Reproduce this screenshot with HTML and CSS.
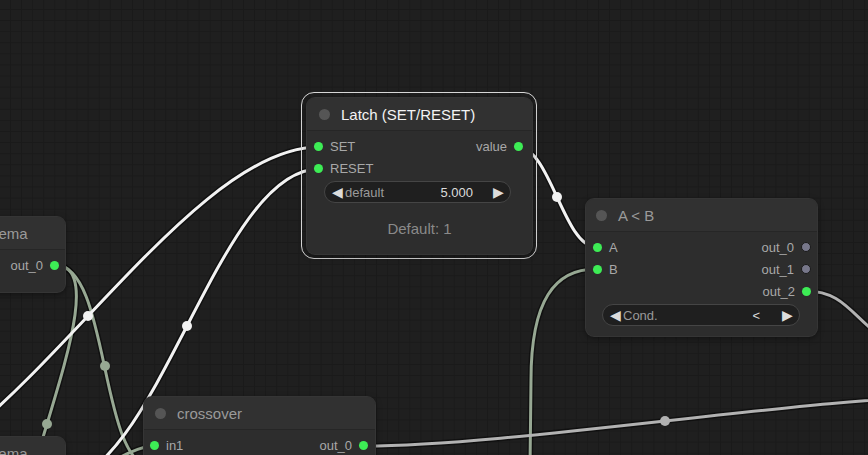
FILE: index.html
```html
<!DOCTYPE html>
<html lang="en">
<head>
    <meta charset="UTF-8">
    <meta name="viewport" content="width=device-width, initial-scale=1.0">
    <title>Graph Editor</title>
    <link rel="stylesheet" href="styles.css">
</head>
<body>

    <div class="canvas">

        <!-- Links (drawn under the nodes) -->
        <svg class="links" width="868" height="455" viewBox="0 0 868 455">
            <g class="shade">
                <path d="M-143 485 C0 485 176 147 319 147"/>
                <path d="M55 483 C157 483 217 169 319 169"/>
                <path d="M518 147 C550 147 564 247 596 247"/>
                <path d="M55 265 C135 265 -41 583 39 583"/>
                <path d="M55 265 C111 265 98 468 154 468"/>
                <path d="M55 485 C82 485 127 446 154 446"/>
                <path d="M596 269 C555 269 531 300 531 380 L530 470"/>
                <path d="M364 446 C515 446 815 396 966 396"/>
                <path d="M806 291 C840 291 850 312 875 332"/>
            </g>
            <g class="link green">
                <path d="M55 265 C135 265 -41 583 39 583"/>
                <path d="M55 265 C111 265 98 468 154 468"/>
                <path d="M55 485 C82 485 127 446 154 446"/>
                <path d="M596 269 C555 269 531 300 531 380 L530 470"/>
                <circle cx="47" cy="424" r="5"/>
                <circle cx="105" cy="366" r="5"/>
            </g>
            <g class="link grey">
                <path d="M364 446 C515 446 815 396 966 396"/>
                <path d="M806 291 C840 291 850 312 875 332"/>
                <circle cx="665" cy="421" r="5"/>
            </g>
            <g class="link white">
                <path d="M-143 485 C0 485 176 147 319 147"/>
                <path d="M55 483 C157 483 217 169 319 169"/>
                <path d="M518 147 C550 147 564 247 596 247"/>
                <circle cx="88" cy="316" r="5"/>
                <circle cx="187" cy="326" r="5"/>
                <circle cx="557" cy="197" r="5"/>
            </g>
        </svg>

        <!-- fast ema (cut off at the left edge) -->
        <div class="node ema-top">
            <div class="title"><span class="knob"></span>fast_ema</div>
            <div class="body">
                <div class="row">
                    <span></span>
                    <span class="slot out">out_0<i class="dot on"></i></span>
                </div>
            </div>
        </div>

        <!-- slow ema (cut off at the bottom left) -->
        <div class="node ema-bottom">
            <div class="title"><span class="knob"></span>slow_ema</div>
        </div>

        <!-- Latch, selected -->
        <div class="selection latch-sel"></div>
        <div class="node latch">
            <div class="title"><span class="knob"></span>Latch (SET/RESET)</div>
            <div class="body">
                <div class="row">
                    <span class="slot in"><i class="dot on"></i>SET</span>
                    <span class="slot out">value<i class="dot on"></i></span>
                </div>
                <div class="row">
                    <span class="slot in"><i class="dot on"></i>RESET</span>
                </div>
                <div class="widget">
                    <span class="arrow">&#9664;</span>
                    <span class="wlabel">default</span>
                    <span class="wvalue">5.000</span>
                    <span class="arrow">&#9654;</span>
                </div>
                <div class="note">Default: 1</div>
            </div>
        </div>

        <!-- A < B -->
        <div class="node compare">
            <div class="title"><span class="knob"></span>A &lt; B</div>
            <div class="body">
                <div class="row">
                    <span class="slot in"><i class="dot on"></i>A</span>
                    <span class="slot out">out_0<i class="dot"></i></span>
                </div>
                <div class="row">
                    <span class="slot in"><i class="dot on"></i>B</span>
                    <span class="slot out">out_1<i class="dot"></i></span>
                </div>
                <div class="row">
                    <span></span>
                    <span class="slot out">out_2<i class="dot on"></i></span>
                </div>
                <div class="widget">
                    <span class="arrow">&#9664;</span>
                    <span class="wlabel">Cond.</span>
                    <span class="wvalue">&lt;</span>
                    <span class="arrow">&#9654;</span>
                </div>
            </div>
        </div>

        <!-- crossover -->
        <div class="node crossover">
            <div class="title"><span class="knob"></span>crossover</div>
            <div class="body">
                <div class="row">
                    <span class="slot in"><i class="dot on"></i>in1</span>
                    <span class="slot out">out_0<i class="dot on"></i></span>
                </div>
            </div>
        </div>

    </div>

</body>
</html>
```

FILE: styles.css
```css
body {
    margin: 0;
    background-color: #1e1e1e;
    font-family: "Liberation Sans", Arial, sans-serif;
}
.canvas {
    position: relative;
    width: 868px;
    height: 455px;
    overflow: hidden;
    background-color: #1f1f1f;
    background-image:
        linear-gradient(to right, #1a1a1a 1px, transparent 1px),
        linear-gradient(to bottom, #1a1a1a 1px, transparent 1px);
    background-size: 11.1px 11.1px;
    background-position: 10px 9px;
}
.links {
    position: absolute;
    left: 0;
    top: 0;
}
.links path {
    fill: none;
}
.shade path {
    stroke: rgba(0, 0, 0, 0.45);
    stroke-width: 6;
}
.link path {
    stroke-width: 3;
}
.white path { stroke: #f2f2f2; }
.white circle { fill: #f2f2f2; }
.green path { stroke: #97a893; }
.green circle { fill: #97a893; }
.grey path { stroke: #b2b2b2; }
.grey circle { fill: #b2b2b2; }

/* nodes */
.node {
    position: absolute;
    background-color: #2d2d2d;
    border-radius: 8px;
    box-shadow: 0 0 0 1px #353535, 0 2px 6px rgba(0, 0, 0, 0.5);
    overflow: hidden;
    color: #a8a8a8;
    font-size: 13px;
}
.title {
    height: 33px;
    box-sizing: border-box;
    display: flex;
    align-items: center;
    padding-left: 11px;
    background-color: #313131;
    border-bottom: 1px solid #262626;
    font-size: 15px;
    color: #9a9a9a;
    white-space: nowrap;
}
.knob {
    width: 11px;
    height: 11px;
    border-radius: 50%;
    background-color: #555;
    margin-right: 11px;
    flex: none;
}
.body {
    padding-top: 4px;
}
.row {
    height: 22px;
    display: flex;
    align-items: center;
    justify-content: space-between;
    padding: 0 6px 0 7px;
}
.slot {
    display: flex;
    align-items: center;
    gap: 7px;
}
.dot {
    width: 10px;
    height: 10px;
    border-radius: 50%;
    box-sizing: border-box;
    background-color: #77778a;
    border: 1px solid #1a1a1a;
}
.dot.on {
    width: 9px;
    height: 9px;
    background-color: #3dec55;
    border: none;
}
.widget {
    height: 22px;
    box-sizing: border-box;
    display: flex;
    align-items: center;
    border: 1px solid #454545;
    border-radius: 11px;
    background-color: #1f1f1f;
    padding: 0 6px 0 7px;
    margin-top: 2px;
}
.arrow {
    color: #dcdcdc;
    font-size: 14px;
}
.wlabel {
    margin-left: 2px;
    flex: 1;
    color: #9a9a9a;
}
.wvalue {
    color: #dcdcdc;
    margin-right: 20px;
}
.note {
    text-align: center;
    font-size: 15px;
    color: #8a8a8a;
    margin-top: 17px;
}

/* Latch (SET/RESET) */
.latch {
    left: 307px;
    top: 98px;
    width: 225px;
    height: 156px;
}
.latch .title {
    color: #f4f4f4;
    padding-left: 12px;
}
.latch .row {
    padding-right: 9px;
}
.latch .widget {
    margin-left: 17px;
    margin-right: 21px;
}
.selection {
    position: absolute;
    border: 1.5px solid #d8d8d8;
    border-radius: 13px;
}
.latch-sel {
    left: 301px;
    top: 92px;
    width: 234px;
    height: 165px;
}

/* A < B */
.compare {
    left: 586px;
    top: 199px;
    width: 231px;
    height: 137px;
}
.compare .title {
    padding-left: 10px;
}
.compare .row {
    padding-right: 6px;
}
.compare .widget {
    margin-left: 16px;
    margin-right: 17px;
}
.compare .wvalue {
    margin-right: 22px;
}

/* crossover */
.crossover {
    left: 144px;
    top: 397px;
    width: 231px;
    height: 110px;
}
.crossover .row {
    padding-right: 7px;
    padding-left: 6px;
}

/* ema nodes */
.ema-top {
    left: -67px;
    top: 217px;
    width: 132px;
    height: 75px;
}
.ema-top .row {
    padding-right: 6px;
}
.ema-bottom {
    left: -73px;
    top: 437px;
    width: 138px;
    height: 70px;
}
```
